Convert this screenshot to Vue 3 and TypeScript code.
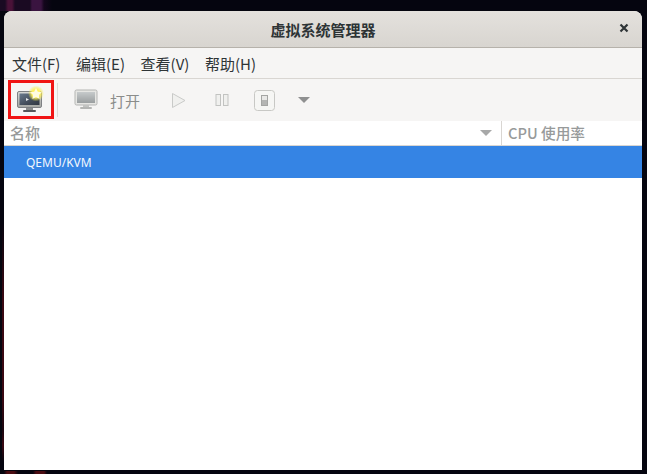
<script setup lang="ts">
const menus: string[] = ['文件(F)', '编辑(E)', '查看(V)', '帮助(H)']
</script>

<template>
  <div class="desktop">
    <div class="window">
      <header class="titlebar">
        <span class="title">虚拟系统管理器</span>
        <svg class="close" width="10" height="10" viewBox="0 0 10 10">
          <path d="M1.5 1.5 L8.5 8.5 M8.5 1.5 L1.5 8.5" stroke="#2e3436" stroke-width="2.2" fill="none" />
        </svg>
      </header>
      <nav class="menubar">
        <span v-for="m in menus" :key="m" class="menu">{{ m }}</span>
      </nav>
      <div class="toolbar">
        <div class="tool new">
          <svg width="38" height="32" viewBox="0 0 38 32">
            <defs>
              <linearGradient id="scr" x1="0" y1="0" x2="1" y2="1">
                <stop offset="0" stop-color="#6a7a8e" />
                <stop offset="0.6" stop-color="#434c59" />
                <stop offset="1" stop-color="#323842" />
              </linearGradient>
              <linearGradient id="bez" x1="0" y1="0" x2="0" y2="1">
                <stop offset="0" stop-color="#d8d8d6" />
                <stop offset="1" stop-color="#a4a6a2" />
              </linearGradient>
              <radialGradient id="glow">
                <stop offset="0.5" stop-color="#fff060" stop-opacity="1" />
                <stop offset="1" stop-color="#f4e94a" stop-opacity="0" />
              </radialGradient>
            </defs>
            <rect x="7.5" y="7.5" width="24" height="16" rx="1.5" fill="url(#bez)" stroke="#7f8184" stroke-width="1" />
            <rect x="9.5" y="9.5" width="20" height="11.5" fill="url(#scr)" />
            <path d="M16 14 L19 15.5 L16 17 Z" fill="#e6e8ea" />
            <rect x="16" y="24" width="7" height="2" fill="#8a8c8c" />
            <rect x="13" y="26" width="13" height="2" rx="1" fill="#55575a" />
            <circle cx="26" cy="9.5" r="8" fill="url(#glow)" />
            <path d="M26 4 L27.8 7.7 L31.8 8.2 L28.9 11 L29.6 15 L26 13 L22.4 15 L23.1 11 L20.2 8.2 L24.2 7.7 Z" fill="#fffbe0" />
          </svg>
        </div>
        <div class="sep"></div>
        <div class="tool monitor">
          <svg width="26" height="24" viewBox="0 0 26 24">
            <defs>
              <linearGradient id="scr2" x1="0" y1="0" x2="0" y2="1">
                <stop offset="0" stop-color="#c6cacb" />
                <stop offset="1" stop-color="#9a9e9f" />
              </linearGradient>
            </defs>
            <rect x="1" y="2" width="22" height="15" rx="1.5" fill="#e6e6e3" stroke="#b4b5b3" />
            <rect x="3" y="4" width="18" height="11" fill="url(#scr2)" />
            <rect x="9" y="17" width="6" height="2" fill="#c2c3c1" />
            <rect x="6" y="19" width="12" height="2" rx="1" fill="#b4b5b3" />
          </svg>
        </div>
        <span class="open">打开</span>
        <svg class="play" width="16" height="17" viewBox="0 0 16 17">
          <path d="M1.5 1.5 L14 8.5 L1.5 15.5 Z" fill="#f0f0ee" stroke="#c9cac8" stroke-width="1" />
        </svg>
        <svg class="pause" width="14" height="14" viewBox="0 0 14 14">
          <rect x="1" y="1.5" width="4.5" height="11" fill="#f0f0ee" stroke="#c2c3c1" />
          <rect x="8.5" y="1.5" width="4.5" height="11" fill="#f0f0ee" stroke="#c2c3c1" />
        </svg>
        <svg class="power" width="21" height="21" viewBox="0 0 21 21">
          <rect x="0.5" y="0.5" width="20" height="20" rx="3" fill="#f6f6f4" stroke="#c8c8c5" />
          <rect x="7.5" y="5.5" width="6" height="10" fill="#e8e8e6" stroke="#a4a5a3" />
          <rect x="8" y="10" width="5" height="5" fill="#b4b5b3" />
        </svg>
        <svg class="caret" width="12" height="6" viewBox="0 0 12 6">
          <path d="M0 0 H12 L6 6 Z" fill="#8f9090" />
        </svg>
      </div>
      <div class="thead">
        <div class="col-name">
          <span>名称</span>
          <svg width="12" height="6" viewBox="0 0 12 6">
            <path d="M0 0 H12 L6 6 Z" fill="#a7a8a8" />
          </svg>
        </div>
        <div class="col-cpu">CPU 使用率</div>
      </div>
      <div class="row">QEMU/KVM</div>
      <div class="body"></div>
    </div>
    <div class="highlight"></div>
  </div>
</template>

<style>
html, body { margin: 0; background: #05050f; }
</style>

<style scoped>
.desktop {
  position: relative;
  width: 647px;
  height: 474px;
  box-sizing: border-box;
  padding: 11px 5px 4px 4px;
  overflow: hidden;
  background:
    linear-gradient(90deg, transparent 5px, #4a1238 8px, #4a1238 12px, transparent 15px) 0 0 / 100% 11px no-repeat,
    linear-gradient(90deg, #1a0a22 16px, #1a0a22 30px, #3a1440 32px, #3a1440 41px, #14061c 44px, transparent 52px) 0 0 / 100% 11px no-repeat,
    linear-gradient(180deg, transparent 220px, #3a0812 300px, #3a0812 400px, #1a0610 430px, #3a0812 445px, transparent 462px) 2px 0 / 2px 100% no-repeat,
    linear-gradient(90deg, transparent 4px, #4a0c12 7px, #4a0c12 14px, transparent 18px, transparent 33px, #4a0c12 36px, #4a0c12 44px, transparent 47px) 0 100% / 100% 3px no-repeat,
    #05050f;
  font-family: "Noto Sans CJK SC", "Noto Sans", sans-serif;
}
.window {
  height: 100%;
  display: flex;
  flex-direction: column;
  background: #fff;
  border-radius: 8px 8px 0 0;
  overflow: hidden;
}
.titlebar {
  height: 36px;
  flex: none;
  display: flex;
  align-items: center;
  justify-content: center;
  position: relative;
  background: linear-gradient(#e4e1dd, #d8d5d0);
  border-bottom: 1px solid #b6b2ab;
}
.title {
  font-size: 15px;
  font-weight: 700;
  color: #2e3436;
  margin-top: 1px;
}
.close {
  position: absolute;
  right: 13px;
  top: 12px;
}
.menubar {
  height: 30px;
  flex: none;
  box-sizing: content-box;
  display: flex;
  align-items: center;
  gap: 15.6px;
  padding-left: 8px;
  background: #f6f5f4;
  border-bottom: 1px solid #d9d6d2;
  font-size: 15px;
  color: #2e3436;
}
.toolbar {
  height: 42px;
  flex: none;
  display: flex;
  align-items: center;
  background: #f6f5f4;
}
.tool.new { width: 49px; display: flex; justify-content: center; padding-left: 1px; box-sizing: border-box; }
.sep { width: 1px; height: 34px; background: #dcdad6; margin-left: 4px; }
.tool.monitor { margin-left: 16px; display: flex; }
.open { font-size: 15px; color: #8b8d8b; margin-left: 10px; }
.play { margin-left: 31px; }
.pause { margin-left: 28px; }
.power { margin-left: 25px; }
.caret { margin-left: 23px; }
.thead {
  height: 24px;
  flex: none;
  display: flex;
  background: #fff;
  border-bottom: 1px solid #d9d6d2;
  font-size: 14.67px;
  font-weight: 500;
  color: #979a9a;
  line-height: 22px;
}
.col-name {
  width: 498px;
  flex: none;
  box-sizing: border-box;
  display: flex;
  align-items: center;
  justify-content: space-between;
  padding: 0 9px 1px 6px;
  border-right: 1px solid #d9d6d2;
}
.col-name span { font-size: 15px; }
.col-cpu {
  display: flex;
  align-items: center;
  padding-left: 6px;
  padding-bottom: 1px;
}
.row {
  height: 32px;
  flex: none;
  display: flex;
  align-items: center;
  padding-left: 22px;
  background: #3584e4;
  color: #f2f7fd;
  font-size: 12px;
  font-family: "Noto Sans", sans-serif;
}
.body { flex: 1; background: #fff; }
.highlight {
  position: absolute;
  left: 8px;
  top: 80px;
  width: 46px;
  height: 39px;
  box-sizing: border-box;
  border: 3px solid #f01414;
}
</style>
